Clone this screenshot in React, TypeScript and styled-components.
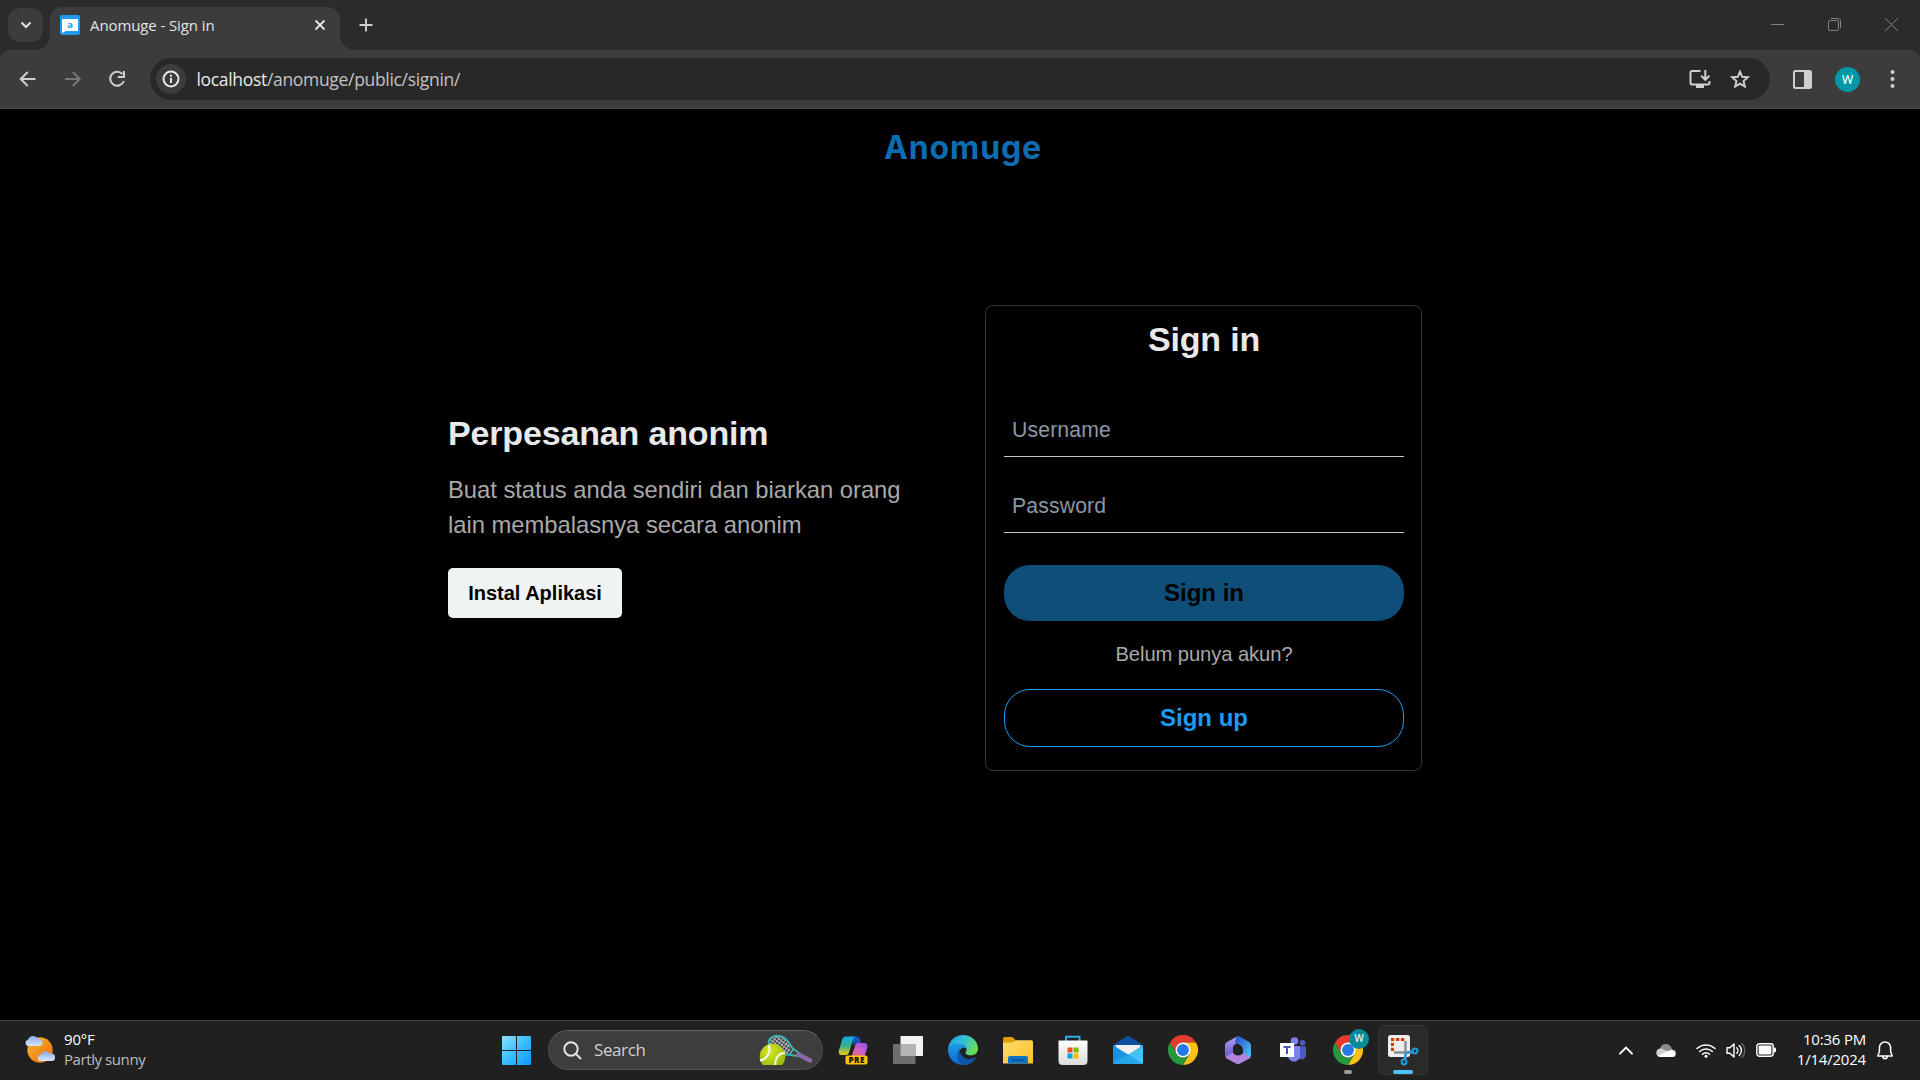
import React from "react";
import styled, { createGlobalStyle, css } from "styled-components";

const uiFont = `"Open Sans", "Noto Sans", sans-serif`;
const pageFont = `"Liberation Sans", Arial, sans-serif`;

const GlobalStyle = createGlobalStyle`
  * { box-sizing: border-box; }
  html, body { margin: 0; padding: 0; background: #000; overflow: hidden; }
  svg { display: block; flex: none; }
  button { cursor: pointer; }
`;

const Screen = styled.div`
  width: 1920px;
  height: 1080px;
  display: flex;
  flex-direction: column;
  background: #000;
  font-family: ${uiFont};
`;

/* ---------- Browser chrome ---------- */

const TabStrip = styled.header`
  height: 50px;
  display: flex;
  align-items: flex-start;
  background: #2b2b2b;
  padding-left: 8px;
`;

const TabSearch = styled.button`
  width: 35px;
  height: 34px;
  margin: 8px 7px 0 0;
  border: 0;
  padding: 0;
  border-radius: 12px;
  background: #3c3c3c;
  display: grid;
  place-items: center;
`;

const Tab = styled.div`
  position: relative;
  width: 290px;
  height: 43px;
  margin-top: 7px;
  padding: 0 14px 7px 10px;
  border-radius: 12px 12px 0 0;
  background: #3c3c3c;
  display: flex;
  align-items: center;

  &::before,
  &::after {
    content: "";
    position: absolute;
    bottom: 0;
    width: 14px;
    height: 14px;
  }
  &::before {
    left: -14px;
    background: radial-gradient(circle at 0 0, transparent 13.5px, #3c3c3c 14px);
  }
  &::after {
    right: -14px;
    background: radial-gradient(circle at 100% 0, transparent 13.5px, #3c3c3c 14px);
  }
`;

const TabTitle = styled.span`
  flex: 1;
  margin-left: 10px;
  font-size: 15px;
  letter-spacing: -0.1px;
  line-height: 20px;
  color: #e3e3e3;
  white-space: nowrap;
`;

const NewTab = styled.div`
  margin: 18px 0 0 19px;
`;

const WindowControls = styled.div`
  margin-left: auto;
  padding: 18px 22px 0 0;
  display: flex;
  gap: 44px;
`;

const ToolbarBack = styled.div`
  background: #2b2b2b;
`;

const Toolbar = styled.div`
  height: 59px;
  display: flex;
  align-items: center;
  background: #3c3c3c;
  border-bottom: 1px solid #4a4a4a;
  border-radius: 10px 10px 0 0;
  padding-left: 18px;
`;

const NavButtons = styled.div`
  display: flex;
  gap: 24.5px;
  width: 132px;
`;

const Omnibox = styled.div`
  width: 1620px;
  height: 42px;
  border-radius: 21px;
  background: #282828;
  display: flex;
  align-items: center;
  padding: 0 20px 0 6px;
`;

const SiteInfo = styled.span`
  width: 30px;
  height: 30px;
  border-radius: 50%;
  background: #3c3c3c;
  display: grid;
  place-items: center;
`;

const Url = styled.span`
  flex: 1;
  margin-left: 10.5px;
  font-size: 17.5px;
  letter-spacing: -0.32px;
  line-height: 24px;
  color: #c3c3c3;
`;

const UrlHost = styled.span`
  color: #e8e8e8;
`;

const OmniActions = styled.div`
  display: flex;
  align-items: center;
  gap: 19px;
`;

const ToolbarActions = styled.div`
  display: flex;
  align-items: center;
  margin-left: 23px;
`;

const Avatar = styled.span`
  width: 25px;
  height: 25px;
  margin: 0 30px 0 23px;
  border-radius: 50%;
  background: #0097a7;
  color: #fff;
  font: 400 13px/25px Roboto, sans-serif;
  text-align: center;
`;

/* ---------- Page ---------- */

const Page = styled.main`
  flex: 1;
  background: #000;
  font-family: ${pageFont};
`;

const Brand = styled.h1`
  margin: 0;
  padding: 19px 0 0 6px;
  font-family: Inter, sans-serif;
  font-weight: 700;
  font-size: 32px;
  line-height: 40px;
  letter-spacing: 0.9px;
  text-align: center;
  color: #0e6cb0;
`;

const Columns = styled.div`
  width: 974px;
  margin: 137px 0 0 448px;
  display: flex;
  justify-content: space-between;
  align-items: flex-start;
`;

const Intro = styled.section`
  width: 470px;
  padding-top: 108px;
`;

const Heading = styled.h2<{ $center?: boolean }>`
  margin: 0;
  font-size: 34px;
  line-height: 40px;
  letter-spacing: -0.16px;
  font-weight: 700;
  color: #e7e9ea;
  ${(p) => p.$center && css`text-align: center;`}
`;

const Lead = styled.p`
  margin: 19px 0 26px;
  font-size: 23.8px;
  line-height: 35px;
  letter-spacing: -0.03px;
  color: #a9a9a9;
`;

const InstallButton = styled.button`
  width: 174px;
  height: 50px;
  border: 0;
  padding: 0;
  border-radius: 5px;
  background: #eff3f4;
  color: #000;
  font: 700 20px/24px ${pageFont};
  white-space: nowrap;
`;

const Card = styled.form`
  width: 437px;
  height: 466px;
  border: 1px solid #333;
  border-radius: 8px;
  padding: 13px 17px 0 18px;
  display: flex;
  flex-direction: column;
`;

const Field = styled.input`
  height: 50px;
  margin: 0 0 26px;
  padding: 0 8px 3px;
  border: 0;
  border-bottom: 1px solid #c8c8c8;
  background: transparent;
  outline: 0;
  font: 21.2px ${pageFont};
  letter-spacing: 0.15px;
  color: #fff;

  &::placeholder {
    color: #8b98a5;
    opacity: 1;
  }
`;

const Fields = styled.div`
  margin: 48px 0 6px;
  display: flex;
  flex-direction: column;
`;

const PillButton = styled.button<{ $outline?: boolean }>`
  height: ${(p) => (p.$outline ? 58 : 56)}px;
  padding: 0;
  border: ${(p) => (p.$outline ? "1px solid #1d9bf0" : "0")};
  border-radius: 26px;
  background: ${(p) => (p.$outline ? "transparent" : "#0f4e78")};
  color: ${(p) => (p.$outline ? "#1d9bf0" : "#000")};
  font: 700 24px/28px ${pageFont};
`;

const Hint = styled.p`
  margin: 21px 0 23px;
  font-size: 20.2px;
  line-height: 24px;
  letter-spacing: -0.08px;
  text-align: center;
  color: #a9a9a9;
`;

/* ---------- Taskbar ---------- */

const Taskbar = styled.footer`
  height: 60px;
  display: flex;
  align-items: center;
  background: #202020;
  border-top: 1px solid #444;
  padding-bottom: 1px;
`;

const Weather = styled.div`
  width: 502px;
  padding: 0 0 2px 25px;
  display: flex;
  align-items: center;
  gap: 9px;
`;

const Stack = styled.div<{ $right?: boolean }>`
  display: flex;
  flex-direction: column;
  padding-bottom: ${(p) => (p.$right ? 2 : 0)}px;
  font-size: 15px;
  line-height: 20px;
  letter-spacing: -0.2px;
  color: #fff;
  white-space: nowrap;
  text-align: ${(p) => (p.$right ? "right" : "left")};
`;

const Muted = styled.span`
  color: #bdbdbd;
  letter-spacing: -0.42px;
`;

const SearchBox = styled.div`
  width: 275px;
  height: 40px;
  margin: 0 2.5px 0 17px;
  padding: 0 9px 0 14px;
  border: 1px solid #4d4d4d;
  border-top-color: #626262;
  border-radius: 20px;
  background: #3d3d3d;
  display: flex;
  align-items: center;
`;

const SearchText = styled.span`
  flex: 1;
  margin-left: 12px;
  font-size: 17px;
  letter-spacing: -0.4px;
  line-height: 24px;
  color: #d0d0d0;
`;

const AppSlot = styled.div<{ $active?: boolean }>`
  position: relative;
  width: 50px;
  height: 50px;
  margin: 0 2.5px;
  border-radius: 6px;
  border: 1px solid ${(p) => (p.$active ? "#353535" : "transparent")};
  background: ${(p) => (p.$active ? "#2b2b2b" : "transparent")};
  display: grid;
  place-items: center;
`;

const RunMark = styled.span<{ $active?: boolean }>`
  position: absolute;
  left: 50%;
  bottom: 0;
  width: ${(p) => (p.$active ? 20 : 8)}px;
  height: 4px;
  border-radius: 2px;
  transform: translateX(-50%);
  background: ${(p) => (p.$active ? "#4cc2ff" : "#9a9a9a")};
`;

const ProfileBadge = styled.span`
  position: absolute;
  right: 3px;
  top: 3px;
  width: 20px;
  height: 20px;
  border-radius: 50%;
  background: #078a97;
  color: #d5eef0;
  font: 500 11px/20px Roboto, sans-serif;
  text-align: center;
`;

const Tray = styled.div`
  margin-left: auto;
  padding-right: 27px;
  display: flex;
  align-items: center;
`;

const TrayItem = styled.span<{ $after: number }>`
  margin-right: ${(p) => p.$after}px;
`;

/* ---------- Icons ---------- */

const BackIcon = ({ dim, flip }: { dim?: boolean; flip?: boolean }) => (
  <svg width="20" height="20" viewBox="0 0 20 20" fill="none" stroke={dim ? "#777" : "#cfcfcf"} strokeWidth="2">
    <path d={flip ? "M2 10h14.500M9.800 3l7 7-7 7" : "M17.500 10H3M9.700 3l-7 7 7 7"} />
  </svg>
);

const ReloadIcon = () => (
  <svg width="20" height="20" viewBox="0 0 20 20" fill="none" stroke="#cfcfcf" strokeWidth="2">
    <path d="M15.500 5.200A7 7 0 1 0 16.800 12" />
    <path d="M17 2v6h-6.200" />
  </svg>
);

const Favicon = () => (
  <svg width="20" height="20" viewBox="0 0 20 20">
    <rect width="20" height="20" rx="2" fill="#1d9bf0" />
    <path d="M2 4h16v12H6l-4 2z" fill="#fff" />
    <text x="10" y="13" textAnchor="middle" fontFamily="Open Sans" fontWeight="700" fontSize="9.500" fill="#1d9bf0">a</text>
  </svg>
);

const InstallIcon = () => (
  <svg width="22" height="20" viewBox="0 0 22 20" fill="none" stroke="#cfcfcf" strokeWidth="2">
    <path d="M11.500 2H3.200A1.700 1.700 0 0 0 1.500 3.700v10A1.700 1.700 0 0 0 3.200 15.500h15.600a1.700 1.700 0 0 0 1.700-1.700V12" />
    <path d="M16.300 1v9.500M12.200 6.800l4.100 4 4.100-4" />
    <path d="M7 15.500h8V19H7z" fill="#cfcfcf" stroke="none" />
  </svg>
);

const StarIcon = () => (
  <svg width="20" height="20" viewBox="0 0 20 20" fill="none" stroke="#cfcfcf" strokeWidth="1.900" strokeLinejoin="miter">
    <path d="M10 2.600l2.200 5.200 5.600.5-4.250 3.700 1.270 5.500L10 14.600l-4.820 2.900 1.270-5.500L2.200 8.300l5.600-.5z" />
  </svg>
);

const PanelIcon = () => (
  <svg width="19" height="19" viewBox="0 0 19 19">
    <rect x="1" y="1" width="17" height="17" rx="1.500" fill="none" stroke="#cfcfcf" strokeWidth="2" />
    <path d="M11 1h7v17h-7z" fill="#cfcfcf" />
  </svg>
);

const WeatherIcon = () => (
  <svg width="30" height="28" viewBox="0 0 30 28">
    <defs>
      <linearGradient id="sun" x1="0" y1="0" x2="1" y2="1">
        <stop offset="0" stopColor="#f8b830" />
        <stop offset="1" stopColor="#f06a0c" />
      </linearGradient>
      <linearGradient id="cloud" x1="0" y1="0" x2="0" y2="1">
        <stop offset="0" stopColor="#86a8e6" />
        <stop offset="1" stopColor="#dbe8fb" />
      </linearGradient>
    </defs>
    <circle cx="15" cy="15" r="12.700" fill="url(#sun)" />
    <path d="M3.500 11a3.300 3.300 0 0 1-.3-6.500A5.500 5.500 0 0 1 13 3.500 3.800 3.800 0 0 1 17.500 7.500 3.500 3.500 0 0 1 14 11z" fill="url(#cloud)" />
    <path d="M15.800 26a3.100 3.100 0 0 1 0-6.200 5 5 0 0 1 9-1.300A3.800 3.800 0 0 1 30 22.500 3.500 3.500 0 0 1 26.500 26z" fill="url(#cloud)" />
  </svg>
);

const StartIcon = () => (
  <svg width="29" height="29" viewBox="0 0 29 29">
    <defs>
      <linearGradient id="win" x1="0" y1="0" x2="1" y2="1">
        <stop offset="0" stopColor="#8ce2ff" />
        <stop offset=".5" stopColor="#3cbcff" />
        <stop offset="1" stopColor="#0a9bff" />
      </linearGradient>
    </defs>
    <path d="M1 0h13v14H0V1a1 1 0 0 1 1-1zM15 0h13a1 1 0 0 1 1 1v13H15zM0 15h14v14H1a1 1 0 0 1-1-1zM15 15h14v13a1 1 0 0 1-1 1H15z" fill="url(#win)" />
  </svg>
);

const TennisIcon = () => (
  <svg width="54" height="32" viewBox="0 0 54 32">
    <defs>
      <pattern id="net" width="3" height="3" patternUnits="userSpaceOnUse" patternTransform="rotate(38)">
        <path d="M0 0h3M0 0v3" stroke="#d8d8d8" strokeWidth="1.500" />
      </pattern>
      <radialGradient id="ball" cx=".4" cy=".3" r=".8">
        <stop offset="0" stopColor="#d6ea24" />
        <stop offset="1" stopColor="#8fae08" />
      </radialGradient>
      <clipPath id="ballClip"><path d="M0 9h27v22H0z" /></clipPath>
    </defs>
    <path d="M10 9C10 3 17 .5 23 3s9 8 8 13-10 6-15 2-6-6-6-9z" fill="#38383c" />
    <path d="M10 9C10 3 17 .5 23 3s9 8 8 13-10 6-15 2-6-6-6-9z" fill="url(#net)" />
    <path d="M10 11C8 3 17-.3 24 3.200c5 2.800 6.500 6.800 9.500 11L40 19l-2 3-9-1.500-4 .5M31 20l3-4.500" fill="none" stroke="#3fb3ab" strokeWidth="1.900" />
    <path d="M39.500 20.500L51 26.500" stroke="#8a6aa5" strokeWidth="4.500" strokeLinecap="round" />
    <g clipPath="url(#ballClip)" fill="none" stroke="#f6f8ec" strokeWidth="2">
      <circle cx="13.500" cy="22.500" r="12.800" fill="url(#ball)" stroke="none" />
      <path d="M9.500 11c3 6-1 14-8.500 15.500M26 19c-7 0-10.500 6-9.500 14" />
    </g>
  </svg>
);

const CopilotIcon = () => (
  <svg width="30" height="30" viewBox="0 0 30 30">
    <defs>
      <linearGradient id="cpA" x1="0" y1="0" x2="0" y2="1">
        <stop offset="0" stopColor="#16a8e8" />
        <stop offset=".5" stopColor="#35b090" />
        <stop offset="1" stopColor="#f2c813" />
      </linearGradient>
      <linearGradient id="cpB" x1="1" y1="0" x2="0" y2="1">
        <stop offset="0" stopColor="#8a54f0" />
        <stop offset=".5" stopColor="#d35fc4" />
        <stop offset="1" stopColor="#f56d62" />
      </linearGradient>
    </defs>
    <path d="M14 1.500h4.500c2.200 0 3 1 3.500 3l1 4h-4c-2 0-3 1-3.500 3z" fill="#1850c8" />
    <path d="M8 1.500h10c-2 .5-2.600 2-3.200 4l-3.600 11.500c-.7 2-1.600 3-3.600 3H4C1 20 .2 18 1 15L4 5C4.800 2.500 6 1.500 8 1.500z" fill="url(#cpA)" />
    <path d="M20 8h6c3 0 4 2 3.200 5L26 23H13l4-12c.6-2 1.500-3 3-3z" fill="url(#cpB)" />
    <rect x="7.500" y="20.500" width="22" height="9" rx="2" fill="#ffc20e" />
    <text x="18.700" y="27.800" textAnchor="middle" fontFamily="Open Sans" fontWeight="800" fontSize="8" letterSpacing=".5" fill="#1b1500">PRE</text>
  </svg>
);

const TaskViewIcon = () => (
  <svg width="30" height="28" viewBox="0 0 30 28">
    <rect x="7.500" y="0" width="22.500" height="20" rx="1" fill="#f2f2f2" />
    <rect x="0" y="8" width="22.500" height="20" rx="1" fill="#6e6e6e" />
    <path d="M7.500 8h15v12h-15z" fill="#b4b4b4" />
  </svg>
);

const EdgeIcon = () => (
  <svg width="30" height="30" viewBox="0 0 30 30">
    <defs>
      <linearGradient id="edA" x1="0" y1=".2" x2="1" y2=".6">
        <stop offset="0" stopColor="#1f9fe6" />
        <stop offset=".5" stopColor="#36c3d5" />
        <stop offset="1" stopColor="#6ae04b" />
      </linearGradient>
      <linearGradient id="edB" x1="0" y1="0" x2="0" y2="1">
        <stop offset="0" stopColor="#1c9de8" />
        <stop offset="1" stopColor="#0a68cc" />
      </linearGradient>
    </defs>
    <path d="M0 14C1 5.500 7.500 0 15 0c9 0 15 6.500 15 13.500 0 4-3 6.800-7 6.800-3.500 0-5.600-1.300-5.600-2.400 0-.8 1.200-1.400 1.200-3.600 0-3-3.200-5.300-7-5.300C6 9 1.500 11 0 14z" fill="url(#edA)" />
    <path d="M0 14.500C1 10.500 5 8.500 10 8.500c4.500 0 8 2.500 8.500 5-2-1.700-7-1-7 4.500 0 6 5 11 11 9.500A15 15 0 0 1 15 30C6.500 30 0 23.500 0 14.500z" fill="url(#edB)" />
    <path d="M12 13.500c-4 4-4 13.500 3 16.500 6 .2 10.500-3 12.600-6.800.4-.7-.2-1-.8-.6-3.500 2-8 2-11.300-.6-3-2.300-4.300-5.500-3.500-8.500z" fill="#1155a8" />
  </svg>
);

const FolderIcon = () => (
  <svg width="30" height="28" viewBox="0 0 30 28">
    <defs>
      <linearGradient id="fold" x1="0" y1="0" x2="1" y2="1">
        <stop offset="0" stopColor="#ffdc6b" />
        <stop offset="1" stopColor="#fdc02c" />
      </linearGradient>
    </defs>
    <path d="M0 2.500A1.500 1.500 0 0 1 1.500 1h8L13 4.500v7H0z" fill="#dd9d06" />
    <path d="M0 6.500h10L13 4.300h15.500A1.500 1.500 0 0 1 30 5.800V27.500H0z" fill="url(#fold)" />
    <path d="M5 27.500v-5.500A2 2 0 0 1 7 20h16a2 2 0 0 1 2 2v5.500z" fill="#0d74c8" />
    <path d="M8.500 24h13" stroke="#0a4c8c" strokeWidth="1.400" />
  </svg>
);

const StoreIcon = () => (
  <svg width="30" height="30" viewBox="0 0 30 30">
    <defs>
      <linearGradient id="bag" x1="0" y1="0" x2="0" y2="1">
        <stop offset="0" stopColor="#fdfdfd" />
        <stop offset="1" stopColor="#dcdcdc" />
      </linearGradient>
    </defs>
    <path d="M8 7V1.800h13.500V7" fill="none" stroke="#2cb0e8" strokeWidth="1.900" />
    <path d="M.5 5.500h29V26a4 4 0 0 1-4 4h-21a4 4 0 0 1-4-4z" fill="url(#bag)" />
    <path d="M9.500 12.500h5v5h-5z" fill="#f25022" />
    <path d="M15.500 12.500h5v5h-5z" fill="#7fba00" />
    <path d="M9.500 18.500h5v5h-5z" fill="#00a4ef" />
    <path d="M15.500 18.500h5v5h-5z" fill="#ffb900" />
  </svg>
);

const MailIcon = () => (
  <svg width="30" height="28" viewBox="0 0 30 28">
    <path d="M0 9L14 .3a2 2 0 0 1 2 0L30 9v5H0z" fill="#0a52a0" />
    <path d="M2.500 9h25v5L15 19 2.500 14z" fill="#f0f0f0" />
    <path d="M0 9l30 19H1.500A1.500 1.500 0 0 1 0 26.500z" fill="#1c93e0" />
    <path d="M30 9v17.500a1.500 1.500 0 0 1-1.500 1.500H27L15.500 18.500z" fill="#3fc4f5" />
    <path d="M0 26.500l15.500-8L30 28H1.500A1.500 1.500 0 0 1 0 26.500z" fill="#27a6ec" />
  </svg>
);

const ChromeIcon = () => (
  <svg width="30" height="30" viewBox="0 0 48 48">
    <path d="M3.200 12A24 24 0 0 1 44.800 12H24L13.600 30z" fill="#e33b2e" />
    <path d="M44.800 12A24 24 0 0 1 24 48L34.400 30 24 12z" fill="#fbc116" />
    <path d="M24 48A24 24 0 0 1 3.200 12L13.600 30A12 12 0 0 0 34.400 30z" fill="#26963f" />
    <circle cx="24" cy="24" r="12" fill="#fff" />
    <circle cx="24" cy="24" r="9.500" fill="#2878e8" />
  </svg>
);

const OfficeIcon = () => (
  <svg width="28" height="28" viewBox="0 0 28 28">
    <defs>
      <linearGradient id="m1" x1="0" y1="0" x2="0" y2="1">
        <stop offset="0" stopColor="#b9a0f5" />
        <stop offset="1" stopColor="#5a52c4" />
      </linearGradient>
      <linearGradient id="m2" x1="0" y1="0" x2="1" y2="1">
        <stop offset="0" stopColor="#2b4cc8" />
        <stop offset="1" stopColor="#4fc8f5" />
      </linearGradient>
    </defs>
    <path d="M14 0L3 6C1.500 7 1 8 1 9.500V19c0 2 1 3 2.500 3.800L9 20V12c0-2 1-3 2-3.500L17 4z" fill="url(#m1)" />
    <path d="M12.500.4a3 3 0 0 1 3 0L25 6c1.500 1 2 2 2 3.500V19c0 2-1 3-2 3.500l-6-3.500v-5c0-2-1-4-3-5L11 6.500z" fill="url(#m2)" />
    <path d="M1.500 21L9 16.500c1 2 3 3 5 3s4-1 5-2.500l7.500 4.500c-.4.500-1 1-1.500 1.300l-9.500 5a3 3 0 0 1-3 0L3 22.800z" fill="#b184dc" />
  </svg>
);

const TeamsIcon = () => (
  <svg width="28" height="26" viewBox="0 0 28 26">
    <circle cx="23.500" cy="5.800" r="2.800" fill="#5059c9" />
    <path d="M18 9.500h9v8a4.500 4.500 0 0 1-9 1z" fill="#5059c9" />
    <circle cx="15.500" cy="4" r="3.800" fill="#7b83eb" />
    <path d="M9 9h12v9c0 4-2.500 6.500-6 6.500S9 22 9 18z" fill="#7b83eb" />
    <rect x="1" y="6" width="14" height="14" rx=".8" fill="#fff" />
    <path d="M4.500 9h7v1.900H9V17H7v-6.100H4.500z" fill="#4b53bc" />
  </svg>
);

const SnipIcon = () => (
  <svg width="32" height="32" viewBox="0 0 32 32">
    <rect x="1" y="1" width="22" height="22" rx="2.500" fill="#eee" />
    <path d="M5.500 17V5.500H18" fill="none" stroke="#d83b01" strokeWidth="3" strokeDasharray="3.300 1.700" />
    <path d="M18.500 7v18M7 18.500h18" stroke="#8b8f93" strokeWidth="2.500" />
    <path d="M19 19l-2 6.500M19 19l6.500-2" stroke="#1a9de0" strokeWidth="2" />
    <circle cx="17" cy="28" r="2.400" fill="none" stroke="#1a9de0" strokeWidth="2" />
    <circle cx="28" cy="17" r="2.400" fill="none" stroke="#1a9de0" strokeWidth="2" />
  </svg>
);

const CloudIcon = () => (
  <svg width="20" height="14" viewBox="0 0 20 14">
    <path d="M4 5.500A6 6 0 0 1 15 4l2 3.500-8 3z" fill="#8b8b8b" />
    <path d="M4.500 14a4.300 4.300 0 0 1 0-8.600c1.500 0 2.500.4 3.500 1.100L16 11z" fill="#cfcfcf" />
    <path d="M2 12.700L12 8c1.300-.6 2.500-1 4-1A3.500 3.500 0 0 1 16.500 14H4.500A4 4 0 0 1 2 12.700z" fill="#fff" />
  </svg>
);

const WifiIcon = () => (
  <svg width="20" height="15" viewBox="0 0 20 15" fill="none" stroke="#fff" strokeWidth="1.500" strokeLinecap="round">
    <path d="M1 5.500a13 13 0 0 1 18 0M3.700 8.500a9 9 0 0 1 12.600 0M6.500 11.300a5 5 0 0 1 7 0" />
    <circle cx="10" cy="13.200" r="1.500" fill="#fff" stroke="none" />
  </svg>
);

const SpeakerIcon = () => (
  <svg width="20" height="17" viewBox="0 0 20 17" fill="none" stroke="#fff" strokeWidth="1.400" strokeLinecap="round" strokeLinejoin="round">
    <path d="M1 5.700h2.800L8 2v13l-4.200-3.700H1z" />
    <path d="M10.800 5.700a4 4 0 0 1 0 5.600M13.300 3.500a7 7 0 0 1 0 10" />
    <path d="M16 1.500a10 10 0 0 1 0 14" stroke="#666" />
  </svg>
);

const BatteryIcon = () => (
  <svg width="20" height="14" viewBox="0 0 20 14">
    <rect x=".8" y=".8" width="16.400" height="12.400" rx="2.600" fill="none" stroke="#fff" strokeWidth="1.400" />
    <rect x="2.600" y="2.600" width="12.800" height="8.800" rx="1" fill="#fff" />
    <path d="M18 4.500h.6A1.400 1.400 0 0 1 20 5.900v2.200a1.400 1.400 0 0 1-1.400 1.400H18z" fill="#fff" />
  </svg>
);

const BellIcon = () => (
  <svg width="16" height="19" viewBox="0 0 16 19" fill="none" stroke="#fff" strokeWidth="1.500" strokeLinejoin="round" strokeLinecap="round">
    <path d="M8 1a5.600 5.600 0 0 0-5.600 5.600v4L.8 15h14.400l-1.600-4.400v-4A5.600 5.600 0 0 0 8 1z" />
    <path d="M5.800 15.500a2.200 2.200 0 0 0 4.400 0" />
  </svg>
);

/* ---------- App ---------- */

const apps = [CopilotIcon, TaskViewIcon, EdgeIcon, FolderIcon, StoreIcon, MailIcon, ChromeIcon, OfficeIcon, TeamsIcon];

export default function App() {
  return (
    <Screen>
      <GlobalStyle />
      <TabStrip>
        <TabSearch aria-label="Search tabs">
          <svg width="12" height="12" viewBox="0 0 12 12" fill="none" stroke="#e3e3e3" strokeWidth="2">
            <path d="M1.500 3.500L6 8l4.500-4.500" />
          </svg>
        </TabSearch>
        <Tab>
          <Favicon />
          <TabTitle>Anomuge - Sign in</TabTitle>
          <svg width="12" height="12" viewBox="0 0 12 12" stroke="#e3e3e3" strokeWidth="1.800">
            <path d="M1.500 1.500l9 9M10.500 1.500l-9 9" />
          </svg>
        </Tab>
        <NewTab>
          <svg width="14" height="14" viewBox="0 0 14 14" stroke="#cfcfcf" strokeWidth="1.900">
            <path d="M7 .5v13M.5 7h13" />
          </svg>
        </NewTab>
        <WindowControls>
          <svg width="13" height="13" viewBox="0 0 13 13" stroke="#808080">
            <path d="M0 6.500h13" />
          </svg>
          <svg width="13" height="13" viewBox="0 0 13 13" fill="none" stroke="#808080">
            <rect x=".5" y="2.500" width="10" height="10" rx="1.500" />
            <path d="M2.800.5h7.200a2.500 2.500 0 0 1 2.500 2.500v7.200" />
          </svg>
          <svg width="13" height="13" viewBox="0 0 13 13" stroke="#808080">
            <path d="M0 0l13 13M13 0L0 13" />
          </svg>
        </WindowControls>
      </TabStrip>

      <ToolbarBack>
        <Toolbar>
          <NavButtons>
            <BackIcon />
            <BackIcon dim flip />
            <ReloadIcon />
          </NavButtons>
          <Omnibox>
            <SiteInfo>
              <svg width="18" height="18" viewBox="0 0 18 18" fill="none" stroke="#e8e8e8" strokeWidth="2">
                <circle cx="9" cy="9" r="7.500" />
                <path d="M9 8v5M9 4.800v2" />
              </svg>
            </SiteInfo>
            <Url>
              <UrlHost>localhost</UrlHost>/anomuge/public/signin/
            </Url>
            <OmniActions>
              <InstallIcon />
              <StarIcon />
            </OmniActions>
          </Omnibox>
          <ToolbarActions>
            <PanelIcon />
            <Avatar>W</Avatar>
            <svg width="5" height="20" viewBox="0 0 5 20" fill="#cfcfcf">
              <circle cx="2.500" cy="3" r="2" />
              <circle cx="2.500" cy="10" r="2" />
              <circle cx="2.500" cy="17" r="2" />
            </svg>
          </ToolbarActions>
        </Toolbar>
      </ToolbarBack>

      <Page>
        <Brand>Anomuge</Brand>
        <Columns>
          <Intro>
            <Heading>Perpesanan anonim</Heading>
            <Lead>Buat status anda sendiri dan biarkan orang lain membalasnya secara anonim</Lead>
            <InstallButton>Instal Aplikasi</InstallButton>
          </Intro>
          <Card>
            <Heading $center>Sign in</Heading>
            <Fields>
              <Field placeholder="Username" />
              <Field placeholder="Password" type="password" />
            </Fields>
            <PillButton type="button">Sign in</PillButton>
            <Hint>Belum punya akun?</Hint>
            <PillButton type="button" $outline>Sign up</PillButton>
          </Card>
        </Columns>
      </Page>

      <Taskbar>
        <Weather>
          <WeatherIcon />
          <Stack>
            <span>90°F</span>
            <Muted>Partly sunny</Muted>
          </Stack>
        </Weather>
        <StartIcon />
        <SearchBox>
          <svg width="19" height="19" viewBox="0 0 19 19" fill="none" stroke="#e4e4e4" strokeWidth="2" strokeLinecap="round">
            <circle cx="8" cy="8" r="6.700" />
            <path d="M12.800 12.800L17.500 17.500" />
          </svg>
          <SearchText>Search</SearchText>
          <TennisIcon />
        </SearchBox>
        {apps.map((Icon, i) => (
          <AppSlot key={i}>
            <Icon />
          </AppSlot>
        ))}
        <AppSlot>
          <ChromeIcon />
          <ProfileBadge>W</ProfileBadge>
          <RunMark />
        </AppSlot>
        <AppSlot $active>
          <SnipIcon />
          <RunMark $active />
        </AppSlot>
        <Tray>
          <TrayItem $after={23}>
            <svg width="14" height="9" viewBox="0 0 14 9" fill="none" stroke="#fff" strokeWidth="1.900" strokeLinecap="round">
              <path d="M1 7.700l6-6 6 6" />
            </svg>
          </TrayItem>
          <TrayItem $after={20}><CloudIcon /></TrayItem>
          <TrayItem $after={10}><WifiIcon /></TrayItem>
          <TrayItem $after={10}><SpeakerIcon /></TrayItem>
          <TrayItem $after={21}><BatteryIcon /></TrayItem>
          <TrayItem $after={11}>
            <Stack $right>
              <span>10:36 PM</span>
              <span>1/14/2024</span>
            </Stack>
          </TrayItem>
          <BellIcon />
        </Tray>
      </Taskbar>
    </Screen>
  );
}
